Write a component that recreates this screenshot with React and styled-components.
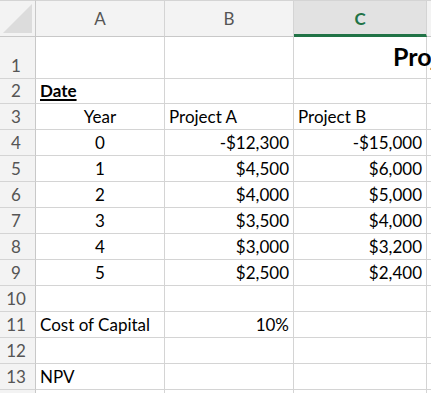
import React from "react";
import styled, { createGlobalStyle } from "styled-components";

const Global = createGlobalStyle`
  html, body { margin: 0; padding: 0; background: #fff; overflow: hidden; }
  body { font-family: Lato, "Open Sans", "Liberation Sans", sans-serif; }
`;

const Sheet = styled.div`
  display: grid;
  grid-template-columns: 36px 129px 129px 133px 40px;
  grid-template-rows: 37px 42px 25px repeat(12, 26px);
  width: 467px;
`;

const Corner = styled.div`
  position: relative;
  background: #f3f3f3;
  border-right: 1px solid #c8c8c8;
  border-bottom: 1px solid #c8c8c8;
  border-top: 1px solid #d4d4d4;
  box-sizing: border-box;
  &::after {
    content: "";
    position: absolute;
    right: 3px;
    bottom: 3px;
    width: 0;
    height: 0;
    border-left: 29px solid transparent;
    border-bottom: 29px solid #dcdcdc;
  }
`;

const ColHead = styled.div`
  box-sizing: border-box;
  background: ${(p) => (p.$active ? "#e2e2e2" : "#f3f3f3")};
  border-top: 1px solid #d4d4d4;
  border-right: 1px solid #d4d4d4;
  border-bottom: ${(p) => (p.$active ? "3px solid #217346" : "1px solid #c8c8c8")};
  display: flex;
  align-items: center;
  justify-content: center;
  padding-top: ${(p) => (p.$active ? "2px" : "0")};
  font-size: 17px;
  font-weight: ${(p) => (p.$active ? 700 : 400)};
  color: ${(p) => (p.$active ? "#217346" : "#555")};
`;

const RowHead = styled.div`
  box-sizing: border-box;
  background: #f3f3f3;
  border-right: 1px solid #c8c8c8;
  border-bottom: 1px solid #d4d4d4;
  display: flex;
  align-items: flex-end;
  justify-content: center;
  padding: 0 3px 2px 0;
  font-size: 17px;
  color: #555;
`;

const Cell = styled.div`
  box-sizing: border-box;
  border-right: 1px solid #d4d4d4;
  border-bottom: 1px solid #d4d4d4;
  display: flex;
  align-items: flex-end;
  justify-content: ${(p) =>
    p.$align === "right" ? "flex-end" : p.$align === "center" ? "center" : "flex-start"};
  padding: 0 4px 2px 4px;
  font-size: 17px;
  color: #000;
  white-space: nowrap;
  overflow: ${(p) => (p.$overflow ? "visible" : "hidden")};
  font-weight: ${(p) => (p.$bold ? 700 : 400)};
  text-decoration: ${(p) => (p.$underline ? "underline" : "none")};
  text-decoration-thickness: 2px;
  text-underline-offset: 2px;
`;

const Title = styled.span`
  font-size: 25px;
  font-weight: 700;
  margin-left: 95px;
  padding-bottom: 5px;
`;

const rows = [
  { n: 1, title: true },
  { n: 2, a: { t: "Date", bold: true, underline: true } },
  { n: 3, a: { t: "Year", align: "center" }, b: { t: "Project A" }, c: { t: "Project B" } },
  { n: 4, a: { t: "0", align: "center" }, b: { t: "-$12,300", align: "right" }, c: { t: "-$15,000", align: "right" } },
  { n: 5, a: { t: "1", align: "center" }, b: { t: "$4,500", align: "right" }, c: { t: "$6,000", align: "right" } },
  { n: 6, a: { t: "2", align: "center" }, b: { t: "$4,000", align: "right" }, c: { t: "$5,000", align: "right" } },
  { n: 7, a: { t: "3", align: "center" }, b: { t: "$3,500", align: "right" }, c: { t: "$4,000", align: "right" } },
  { n: 8, a: { t: "4", align: "center" }, b: { t: "$3,000", align: "right" }, c: { t: "$3,200", align: "right" } },
  { n: 9, a: { t: "5", align: "center" }, b: { t: "$2,500", align: "right" }, c: { t: "$2,400", align: "right" } },
  { n: 10 },
  { n: 11, a: { t: "Cost of Capital", overflow: true }, b: { t: "10%", align: "right" } },
  { n: 12 },
  { n: 13, a: { t: "NPV" } },
  { n: 14, hidden: true },
];

const renderCell = (c, key) => (
  <Cell
    key={key}
    $align={c?.align}
    $bold={c?.bold}
    $underline={c?.underline}
    $overflow={c?.overflow}
  >
    {c?.t}
  </Cell>
);

export default function App() {
  return (
    <>
      <Global />
      <Sheet>
        <Corner />
        <ColHead>A</ColHead>
        <ColHead>B</ColHead>
        <ColHead $active>C</ColHead>
        <ColHead />
        {rows.map((r) => (
          <React.Fragment key={r.n}>
            <RowHead>{r.hidden ? "" : r.n}</RowHead>
            {renderCell(r.a, "a")}
            {renderCell(r.b, "b")}
            {r.title ? (
              <Cell $overflow>
                <Title>Project Analysis</Title>
              </Cell>
            ) : (
              renderCell(r.c, "c")
            )}
            <Cell />
          </React.Fragment>
        ))}
      </Sheet>
    </>
  );
}
